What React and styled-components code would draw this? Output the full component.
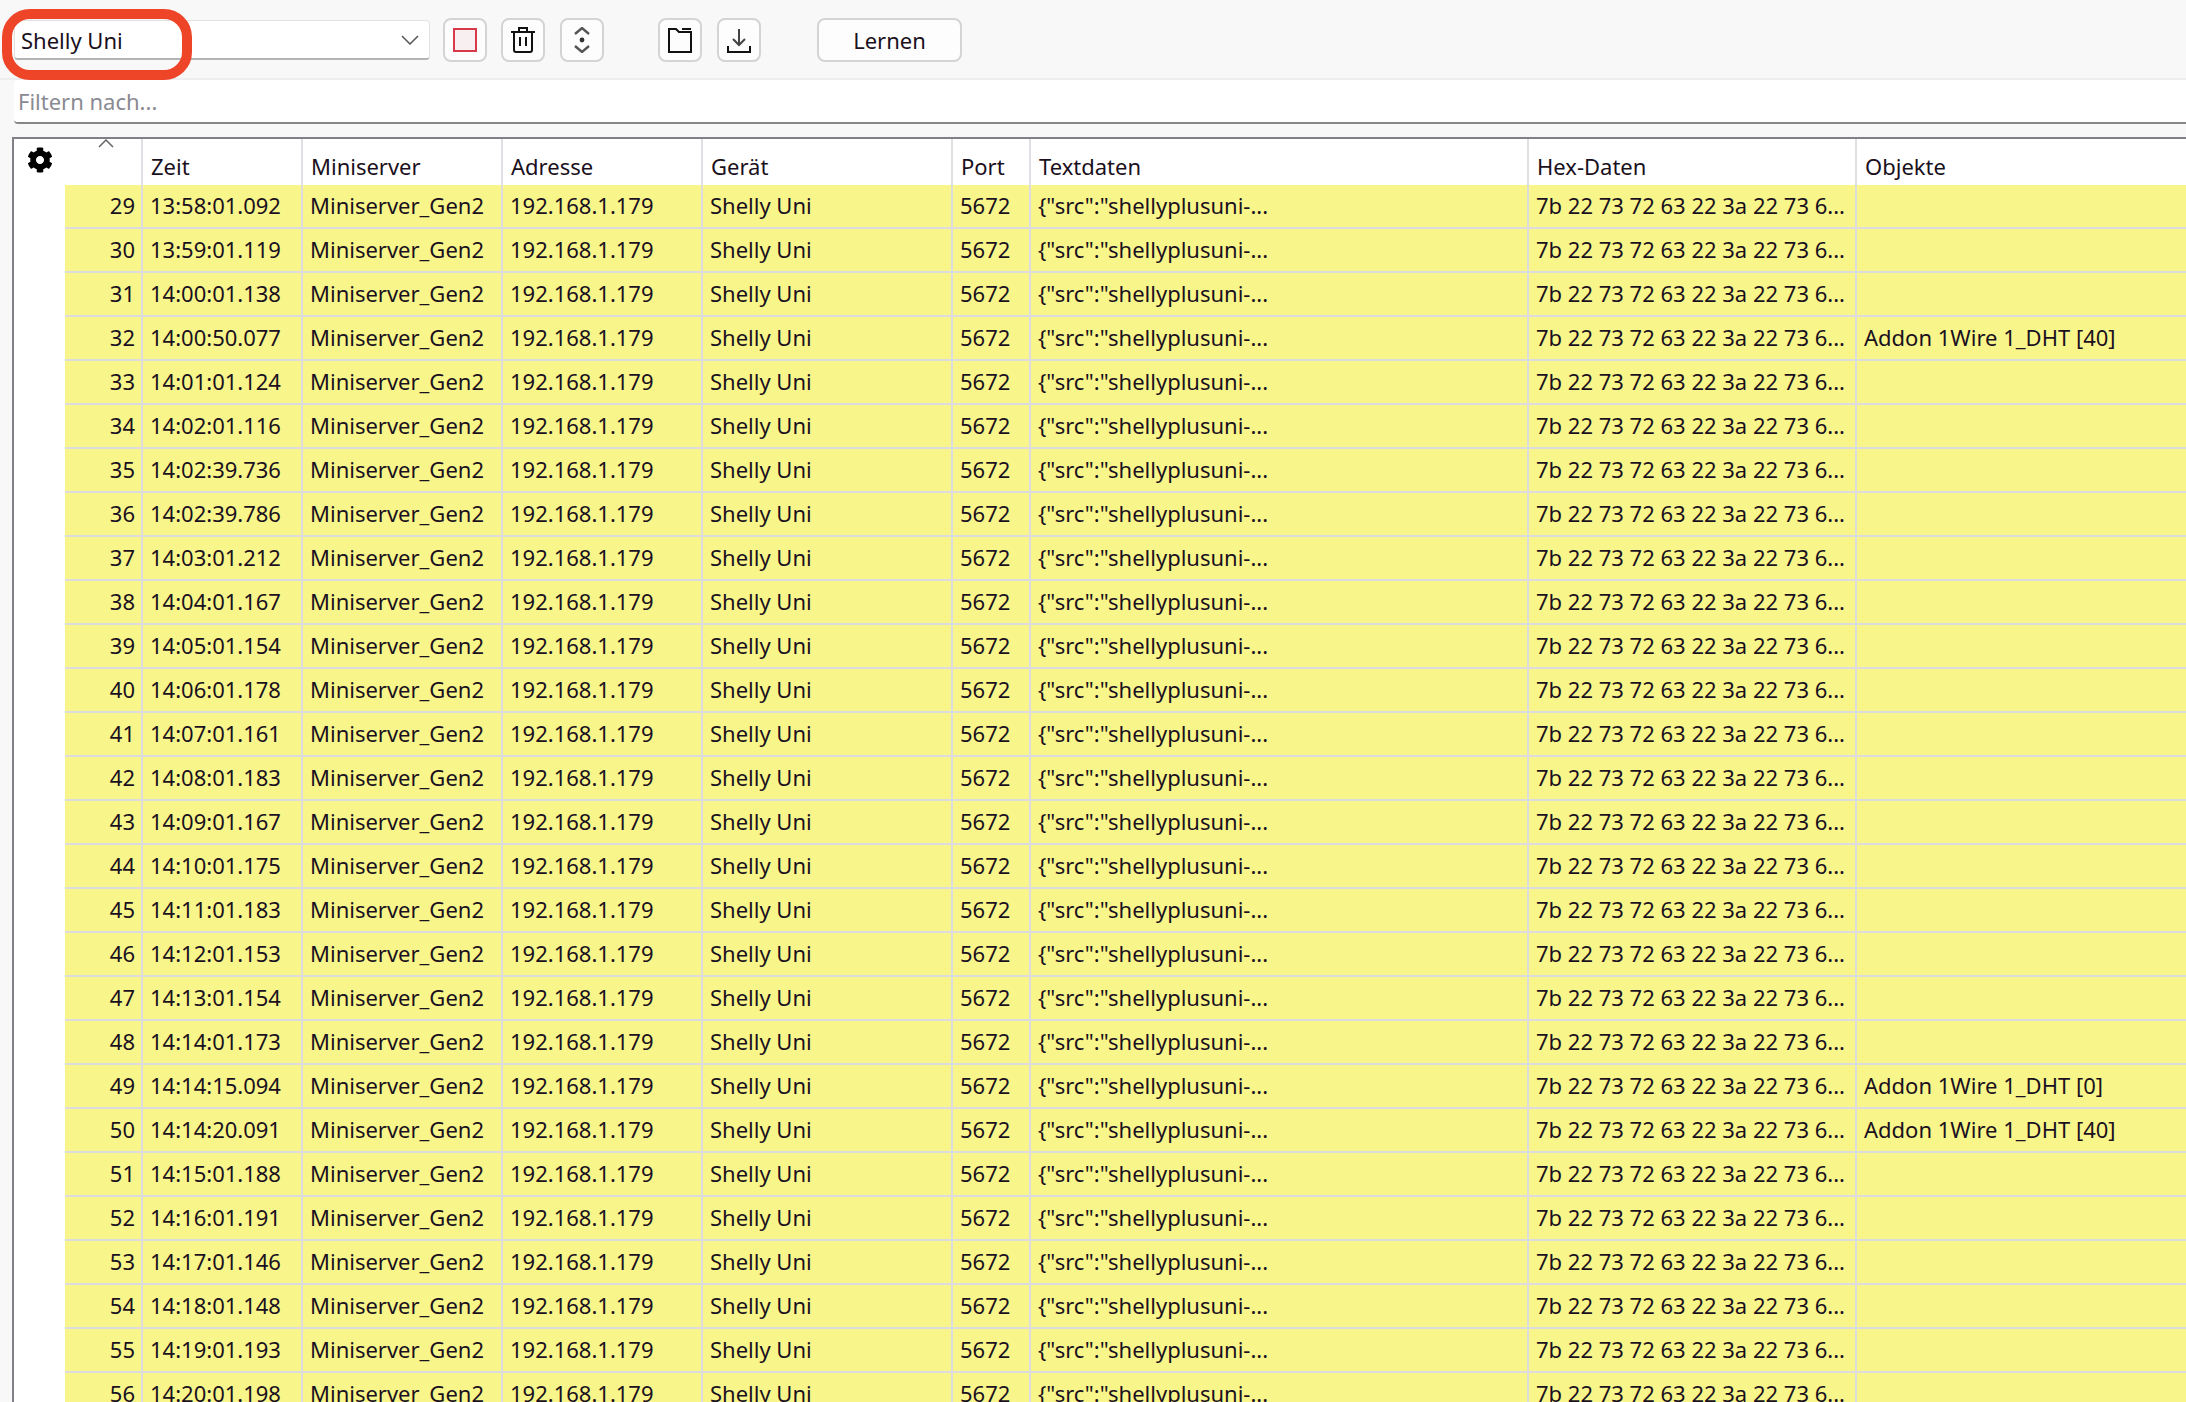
import React from 'react';
import styled, { createGlobalStyle } from 'styled-components';
import { FaCog } from 'react-icons/fa';

const COLUMNS = '78px 160px 200px 200px 250px 78px 498px 328px 1fr';

const rows = [
    [29, '13:58:01.092'], [30, '13:59:01.119'], [31, '14:00:01.138'],
    [32, '14:00:50.077', 'Addon 1Wire 1_DHT [40]'],
    [33, '14:01:01.124'], [34, '14:02:01.116'], [35, '14:02:39.736'],
    [36, '14:02:39.786'], [37, '14:03:01.212'], [38, '14:04:01.167'],
    [39, '14:05:01.154'], [40, '14:06:01.178'], [41, '14:07:01.161'],
    [42, '14:08:01.183'], [43, '14:09:01.167'], [44, '14:10:01.175'],
    [45, '14:11:01.183'], [46, '14:12:01.153'], [47, '14:13:01.154'],
    [48, '14:14:01.173'],
    [49, '14:14:15.094', 'Addon 1Wire 1_DHT [0]'],
    [50, '14:14:20.091', 'Addon 1Wire 1_DHT [40]'],
    [51, '14:15:01.188'], [52, '14:16:01.191'], [53, '14:17:01.146'],
    [54, '14:18:01.148'], [55, '14:19:01.193'], [56, '14:20:01.198'],
];

const headers = ['', 'Zeit', 'Miniserver', 'Adresse', 'Gerät', 'Port', 'Textdaten', 'Hex-Daten', 'Objekte'];

const App = () => (
    <Page>
        <GlobalStyle />
        <Toolbar>
            <Combo>
                <span>Shelly Uni</span>
                <svg width="18" height="10" viewBox="0 0 18 10" fill="none" stroke="#555" strokeWidth="1.5">
                    <path d="M1 1l8 8 8-8" />
                </svg>
            </Combo>
            <IconButton $left={13}>
                <svg width="24" height="24" viewBox="0 0 24 24">
                    <rect x="1" y="1" width="22" height="22" fill="#f8f0f0" stroke="#d93a4a" strokeWidth="2" />
                </svg>
            </IconButton>
            <IconButton $left={14}>
                <svg width="24" height="26" viewBox="0 0 24 26" fill="none" stroke="#111" strokeWidth="2">
                    <path d="M0 5h24M8 5V1h8v4M3 5v18q0 2 2 2h14q2 0 2-2V5M9 10v9M15 10v9" />
                </svg>
            </IconButton>
            <IconButton $left={15}>
                <svg width="18" height="26" viewBox="0 0 18 26" fill="none" stroke="#555" strokeWidth="2.4">
                    <path d="M2 7l7-6 7 6M2 19l7 6 7-6" />
                    <circle cx="9" cy="13" r="2.4" fill="#333" stroke="none" />
                </svg>
            </IconButton>
            <IconButton $left={54}>
                <svg width="24" height="25" viewBox="0 0 24 25" fill="none" stroke="#111" strokeWidth="2">
                    <path d="M1 1v23h22V4H11L8 1zM14 1h9" />
                </svg>
            </IconButton>
            <IconButton $left={15}>
                <svg width="24" height="25" viewBox="0 0 24 25" fill="none" stroke="#111" strokeWidth="2">
                    <path d="M12 1v16M6 11l6 6 6-6" stroke="#444" />
                    <path d="M1 18v6h22v-6" />
                </svg>
            </IconButton>
            <TextButton>Lernen</TextButton>
        </Toolbar>
        <FilterBar>Filtern nach...</FilterBar>
        <Table>
            <SideColumn>
                <FaCog size={26} color="#000" />
            </SideColumn>
            <Grid>
                <HeaderRow>
                    {headers.map((label, i) => (
                        <HeaderCell key={i}>
                            {label}
                            {i === 0 && (
                                <SortArrow width="16" height="9" viewBox="0 0 16 9" fill="none" stroke="#666" strokeWidth="1.5">
                                    <path d="M1 8l7-7 7 7" />
                                </SortArrow>
                            )}
                        </HeaderCell>
                    ))}
                </HeaderRow>
                {rows.map(([id, time, objects]) => (
                    <Row key={id}>
                        <NumberCell>{id}</NumberCell>
                        <Cell>{time}</Cell>
                        <Cell>Miniserver_Gen2</Cell>
                        <Cell>192.168.1.179</Cell>
                        <Cell>Shelly Uni</Cell>
                        <Cell>5672</Cell>
                        <Cell>{'{"src":"shellyplusuni-...'}</Cell>
                        <Cell>7b 22 73 72 63 22 3a 22 73 6...</Cell>
                        <Cell>{objects}</Cell>
                    </Row>
                ))}
            </Grid>
        </Table>
        <Highlight />
    </Page>
);

const GlobalStyle = createGlobalStyle`
    html, body {
        margin: 0;
        padding: 0;
        height: 100%;
        overflow: hidden;
        background: #f8f8f8;
    }
    body {
        font-family: "Noto Sans", "Open Sans", sans-serif;
        font-size: 22px;
        color: #1a1020;
    }
`;

const Page = styled.div`
    position: relative;
    width: 2186px;
    height: 1402px;
    overflow: hidden;
    background: #f8f8f8;
`;

const Toolbar = styled.div`
    display: flex;
    align-items: center;
    height: 76px;
    padding: 2px 0 0 14px;
    box-sizing: border-box;
    border-bottom: 2px solid #eeeeee;
    box-sizing: content-box;
`;

const Combo = styled.div`
    display: flex;
    align-items: center;
    justify-content: space-between;
    box-sizing: border-box;
    width: 416px;
    height: 40px;
    padding: 0 10px 0 6px;
    background: #fff;
    border: 1px solid #e2e2e2;
    border-bottom: 2px solid #b4b4b4;
    border-radius: 4px;
`;

const IconButton = styled.div`
    display: flex;
    align-items: center;
    justify-content: center;
    box-sizing: border-box;
    width: 44px;
    height: 44px;
    margin-left: ${(p) => p.$left}px;
    background: #fdfdfd;
    border: 2px solid #d4d4d4;
    border-radius: 8px;
`;

const TextButton = styled(IconButton)`
    width: 145px;
    margin-left: 56px;
`;

const FilterBar = styled.div`
    display: flex;
    align-items: center;
    box-sizing: border-box;
    height: 44px;
    margin-left: 14px;
    padding-left: 4px;
    background: #fff;
    border-bottom: 2px solid #868686;
    border-radius: 4px 0 0 4px;
    color: #8a8a92;
`;

const Table = styled.div`
    display: flex;
    margin: 13px 0 0 12px;
    height: 1300px;
    background: #fff;
    border-top: 2px solid #808088;
    border-left: 2px solid #808088;
`;

const SideColumn = styled.div`
    flex: 0 0 51px;
    display: flex;
    justify-content: center;
    align-items: flex-start;
    padding-top: 8px;
    box-sizing: border-box;
`;

const Grid = styled.div`
    flex: 1;
    min-width: 0;
`;

const HeaderRow = styled.div`
    display: grid;
    grid-template-columns: ${COLUMNS};
    height: 46px;
    background: #fff;
`;

const HeaderCell = styled.div`
    position: relative;
    display: flex;
    align-items: flex-end;
    padding: 0 0 4px 8px;
    box-sizing: border-box;
    border-right: 2px solid #e0e0e4;
    line-height: 30px;
    &:last-child {
        border-right: none;
    }
`;

const SortArrow = styled.svg`
    position: absolute;
    top: 0;
    left: 33px;
`;

const Row = styled.div`
    display: grid;
    grid-template-columns: ${COLUMNS};
    height: 44px;
    background: #f8f68a;
`;

const Cell = styled.div`
    display: flex;
    align-items: center;
    box-sizing: border-box;
    padding: 0 0 2px 7px;
    white-space: nowrap;
    overflow: hidden;
    border-right: 2px solid #dcdce0;
    border-bottom: 2px solid #dcdce0;
    &:last-child {
        border-right: none;
    }
`;

const NumberCell = styled(Cell)`
    justify-content: flex-end;
    padding: 0 6px 2px 0;
`;

const Highlight = styled.div`
    position: absolute;
    top: 9px;
    left: 2px;
    width: 190px;
    height: 71px;
    box-sizing: border-box;
    border: 10px solid #ee4428;
    border-radius: 28px;
`;

export default App;
